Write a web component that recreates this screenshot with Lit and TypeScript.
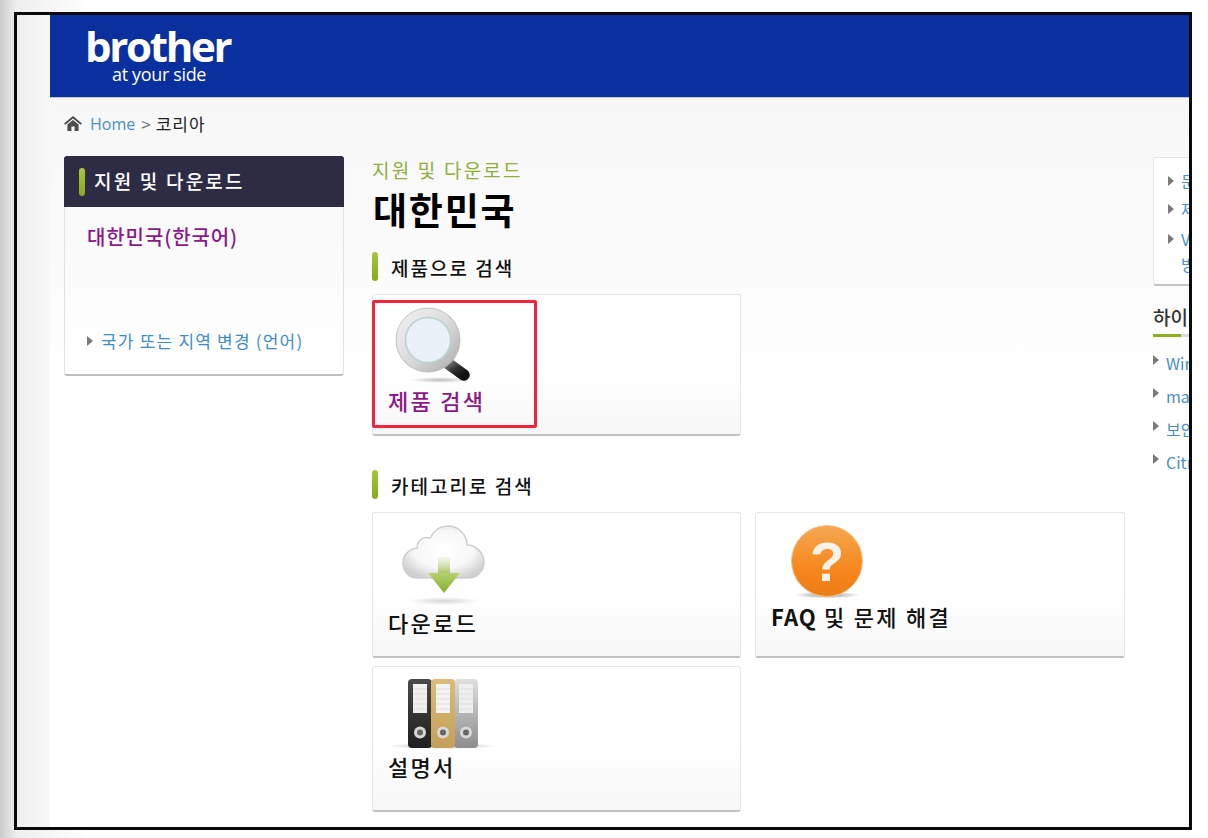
import { LitElement, html, css, svg } from 'lit';
import { customElement } from 'lit/decorators.js';

const magnifier = html`<svg width="110" height="80" viewBox="0 0 110 80">
  <defs>
    <radialGradient id="mShadow"><stop offset="0" stop-color="#888" stop-opacity=".55"/><stop offset="1" stop-color="#888" stop-opacity="0"/></radialGradient>
    <linearGradient id="mRing" x1="0" y1="0" x2="1" y2="1"><stop offset="0" stop-color="#f4f4f4"/><stop offset=".55" stop-color="#d8d8d8"/><stop offset="1" stop-color="#a9a9a9"/></linearGradient>
    <linearGradient id="mHandle" x1="0" y1="0" x2="1" y2="1"><stop offset="0" stop-color="#8a8a8a"/><stop offset=".5" stop-color="#333"/><stop offset="1" stop-color="#111"/></linearGradient>
  </defs>
  <ellipse cx="52" cy="77" rx="30" ry="3" fill="url(#mShadow)"/>
  <path d="M58 59 L76 72" stroke="url(#mHandle)" stroke-width="11.5" stroke-linecap="round"/>
  <circle cx="40" cy="37" r="32" fill="url(#mRing)" stroke="#b5b5b5" stroke-width=".8"/>
  <circle cx="40" cy="37" r="22.5" fill="#e9f1f8" stroke="#bcd0d6" stroke-width="1.5"/>
</svg>`;

const cloud = html`<svg width="110" height="90" viewBox="0 -1 110 90">
  <defs>
    <radialGradient id="cShadow"><stop offset="0" stop-color="#999" stop-opacity=".4"/><stop offset="1" stop-color="#999" stop-opacity="0"/></radialGradient>
    <radialGradient id="cFill" cx=".5" cy=".45" r=".6"><stop offset="0" stop-color="#fff"/><stop offset=".6" stop-color="#f8f8f8"/><stop offset="1" stop-color="#cfcfcf"/></radialGradient>
    <linearGradient id="cArrow" x1="0" y1="0" x2="0" y2="1"><stop offset="0" stop-color="#b6d070"/><stop offset="1" stop-color="#86b02c"/></linearGradient>
    <linearGradient id="cStem" x1="0" y1="0" x2="0" y2="1"><stop offset="0" stop-color="#e4eccb" stop-opacity=".4"/><stop offset="1" stop-color="#a3c458"/></linearGradient>
  </defs>
  <ellipse cx="56" cy="85" rx="36" ry="4" fill="url(#cShadow)"/>
  <path d="M29 62 C19 62 15 53 15 47 C15 39 21 33 29 32 C29 25 35 20 42 22 C46 14 53 10 60 10 C71 10 79 19 79 29 C88 29 96 37 96 46 C96 55 89 62 80 62 Z" fill="url(#cFill)" stroke="#cfcfcf" stroke-width="1.5"/>
  <rect x="50" y="41" width="12" height="17" fill="url(#cStem)"/>
  <path d="M40 57 H72 L56 77 Z" fill="url(#cArrow)"/>
</svg>`;

const faq = html`<svg width="110" height="84" viewBox="0 0 110 84">
  <defs>
    <radialGradient id="fShadow"><stop offset="0" stop-color="#666" stop-opacity=".7"/><stop offset="1" stop-color="#666" stop-opacity="0"/></radialGradient>
    <linearGradient id="fBall" x1="0" y1="0" x2="0" y2="1"><stop offset="0" stop-color="#f4a850"/><stop offset=".65" stop-color="#f6861c"/><stop offset="1" stop-color="#ec7c14"/></linearGradient>
  </defs>
  <ellipse cx="56" cy="80" rx="33" ry="3.5" fill="url(#fShadow)"/>
  <circle cx="56" cy="46" r="35.5" fill="url(#fBall)" stroke="#f3c48f" stroke-width="1"/>
  <text class="qmark" x="56" y="66" text-anchor="middle">?</text>
</svg>`;

const binder = (x: number, w: number, a: string, b: string) => svg`
  <rect x=${x} y="10" width=${w} height="69" rx="4" fill=${`url(#${a})`}/>
  <rect x=${x + 5} y="15" width=${w - 10} height="29" fill=${b}/>
  <path d="M${x + 5} 20 h${w - 10} M${x + 5} 25 h${w - 10} M${x + 5} 30 h${w - 10} M${x + 5} 35 h${w - 10} M${x + 5} 40 h${w - 10}" stroke="#ddd" stroke-width="1"/>
  <circle cx=${x + w / 2} cy="63.5" r="6" fill="#d8d8d8"/>
  <circle cx=${x + w / 2} cy="63.5" r="3" fill="#666"/>`;

const binders = html`<svg width="130" height="80" viewBox="0 0 130 80">
  <defs>
    <radialGradient id="bShadow"><stop offset="0" stop-color="#777" stop-opacity=".6"/><stop offset="1" stop-color="#777" stop-opacity="0"/></radialGradient>
    <linearGradient id="bBlack" x1="0" y1="0" x2="0" y2="1"><stop offset="0" stop-color="#4a4a4a"/><stop offset="1" stop-color="#1e1e1e"/></linearGradient>
    <linearGradient id="bTan" x1="0" y1="0" x2="0" y2="1"><stop offset="0" stop-color="#dcbc78"/><stop offset="1" stop-color="#c49f58"/></linearGradient>
    <linearGradient id="bGrey" x1="0" y1="0" x2="0" y2="1"><stop offset="0" stop-color="#dedede"/><stop offset="1" stop-color="#8d8d8d"/></linearGradient>
  </defs>
  <ellipse cx="55" cy="77" rx="55" ry="3" fill="url(#bShadow)"/>
  ${binder(20, 24, 'bBlack', '#f0f0f0')}
  ${binder(66, 24, 'bGrey', '#efefef')}
  ${binder(43, 24, 'bTan', '#f3f3f3')}
</svg>`;

@customElement('app-root')
export class AppRoot extends LitElement {
  static styles = css`
    :host {
      display: flex;
      box-sizing: border-box;
      height: 838px;
      padding: 12px 16px 8px 14px;
      background: linear-gradient(to right, #cbcbcb, #eeeeee 16px, #ffffff 90px);
      font-family: "Noto Sans CJK KR", "Noto Sans", sans-serif;
      color: #111;
    }
    a { text-decoration: none; color: inherit; }
    .frame {
      flex: 1;
      min-width: 0;
      border: 3px solid #0a0a0a;
      padding-left: 33px;
      overflow: hidden;
      background: linear-gradient(to right, #efefef, #ffffff 60px);
    }
    .page {
      height: 100%;
      background: linear-gradient(to bottom, #f5f5f5, #ffffff 400px);
    }
    .top {
      height: 83px;
      box-sizing: border-box;
      background: #0a2f9e;
      border-bottom: 1px solid #c8c8c8;
      padding: 12px 0 0 35px;
      color: #fff;
    }
    .logo {
      font-family: "Open Sans", sans-serif;
      font-size: 42px;
      line-height: 38px;
      font-weight: 700;
      letter-spacing: -2.3px;
    }
    .tag {
      font-family: "Open Sans", sans-serif;
      font-size: 18px;
      line-height: 19px;
      letter-spacing: -.35px;
      padding-left: 27px;
    }
    .crumb {
      display: flex;
      align-items: center;
      height: 58px;
      box-sizing: border-box;
      padding: 0 0 7px 14px;
      font-size: 17px;
      color: #222;
    }
    .crumb svg { margin-right: 8px; }
    .crumb a {
      font-family: "Open Sans", sans-serif;
      color: #4a8fc6;
      font-size: 16px;
    }
    .crumb .sep { color: #777; margin: 0 6px; }
    .crumb .here { letter-spacing: 1px; margin-left: -1px; }
    .cols {
      display: flex;
      padding-left: 14px;
      width: 1400px;
    }
    .side {
      flex: none;
      width: 280px;
      margin-right: 28px;
    }
    .side-head {
      display: flex;
      align-items: center;
      gap: 9px;
      height: 51px;
      box-sizing: border-box;
      padding-left: 15px;
      border-radius: 3px 3px 0 0;
      background: #2e2c45;
      color: #fff;
      font-size: 19px;
      font-weight: 500;
      letter-spacing: 2.2px;
    }
    .side-head .label { margin-top: -3px; }
    .side-body {
      height: 169px;
      box-sizing: border-box;
      padding: 14px 0 0 22px;
      background: linear-gradient(to bottom, #f9f9f9, #ffffff);
      border: 1px solid #e2e2e2;
      border-top: 0;
      border-bottom: 2px solid #bdbdbd;
      border-radius: 0 0 3px 3px;
    }
    .current {
      color: #8a1a86;
      font-size: 20px;
      font-weight: 500;
      line-height: 32px;
      letter-spacing: .9px;
    }
    .side-link {
      display: flex;
      align-items: center;
      gap: 8px;
      margin-top: 75px;
      font-size: 17px;
      line-height: 26px;
      letter-spacing: 1.2px;
      color: #3f8cc6;
    }
    .tri {
      flex: none;
      width: 0;
      height: 0;
      border-style: solid;
      border-width: 5px 0 5px 6px;
      border-color: transparent transparent transparent #7a7a7a;
    }
    .main {
      flex: none;
      width: 753px;
      margin-right: 28px;
    }
    .eyebrow {
      height: 28px;
      line-height: 28px;
      font-size: 19px;
      letter-spacing: 2.2px;
      color: #8fae3c;
    }
    h1 {
      margin: 0;
      height: 50px;
      padding-left: 1px;
      line-height: 50px;
      font-size: 37px;
      font-weight: 700;
      letter-spacing: 1.8px;
      color: #000;
    }
    .sec {
      display: flex;
      align-items: center;
      gap: 13px;
      height: 29px;
      margin: 18px 0 13px;
      font-size: 19px;
      font-weight: 500;
      letter-spacing: 2px;
    }
    .sec .label { margin-top: 2px; }
    .sec.next { margin-top: 34px; }
    .pill {
      flex: none;
      width: 6px;
      height: 29px;
      border-radius: 3px;
      background: linear-gradient(to bottom, #a8c63a, #8aa81e);
    }
    .side-head .pill { height: 28px; }
    .card {
      box-sizing: border-box;
      height: 146px;
      background: linear-gradient(to bottom, #ffffff 55%, #f7f7f7);
      border: 1px solid #e6e6e6;
      border-bottom: 2px solid #c2c2c2;
      border-radius: 3px;
    }
    .card.search {
      width: 369px;
      height: 142px;
      padding-top: 5px;
    }
    .tile {
      display: block;
      padding: 2px 0 0 15px;
      font-size: 22px;
      line-height: 34px;
      font-weight: 500;
      letter-spacing: 2.3px;
    }
    .tile svg { display: block; }
    .tile .qmark {
      font-family: "Liberation Sans", sans-serif;
      font-size: 56px;
      font-weight: 700;
      letter-spacing: 0;
      fill: #f8f3ea;
    }
    .tile b { font-weight: 700; letter-spacing: 1px; }
    .hit {
      box-sizing: border-box;
      width: 165px;
      height: 128px;
      margin-left: -1px;
      border: 3px solid #f0243c;
      border-radius: 2px;
      padding: 0 0 0 13px;
      color: #8a1a86;
    }
    .grid {
      display: grid;
      grid-template-columns: 369px 370px;
      column-gap: 14px;
      row-gap: 8px;
    }
    .aside { flex: none; width: 240px; }
    .notes {
      height: 129px;
      box-sizing: border-box;
      margin-top: 1px;
      padding: 9px 0 0 14px;
      background: #fff;
      border: 1px solid #e4e4e4;
      border-bottom: 2px solid #c4c4c4;
      border-radius: 3px;
      color: #4a8fc6;
      font-size: 16px;
    }
    .note {
      display: flex;
      align-items: center;
      gap: 7px;
      height: 28px;
    }
    .note.wrap { margin-top: 2px; }
    .note-rest { padding-left: 13px; line-height: 24px; margin-top: -1px; }
    .aside h2 {
      margin: 16px 0 9px;
      height: 32px;
      line-height: 30px;
      font-size: 19px;
      font-weight: 500;
      color: #333;
      border-bottom: 3px solid #d8d8d8;
      position: relative;
    }
    .aside h2::after {
      content: "";
      position: absolute;
      left: 0;
      bottom: -3px;
      width: 28px;
      height: 3px;
      background: #8fae1e;
    }
    .hl {
      display: flex;
      align-items: center;
      gap: 7px;
      height: 33px;
      font-size: 16px;
      color: #4a8fc6;
    }
    .hl .tri { margin-top: -5px; }
  `;

  render() {
    return html`
      <div class="frame">
        <div class="page">
          <div class="top">
            <div class="logo">brother</div>
            <div class="tag">at your side</div>
          </div>
          <div class="crumb">
            <svg width="18" height="15" viewBox="0 0 18 15">
              <path d="M9 0 L18 7.5 L16.6 8.8 L9 2.6 L1.4 8.8 L0 7.5 Z" fill="#4c4c4c"/>
              <path d="M3.4 8.4 L9 3.9 L14.6 8.4 V15 H10.6 V10.5 H7.4 V15 H3.4 Z" fill="#4c4c4c"/>
            </svg>
            <a href="#">Home</a><span class="sep">&gt;</span><span class="here">코리아</span>
          </div>
          <div class="cols">
            <div class="side">
              <div class="side-head"><span class="pill"></span><span class="label">지원 및 다운로드</span></div>
              <div class="side-body">
                <a class="current" href="#">대한민국(한국어)</a>
                <div class="side-link"><span class="tri"></span><a href="#">국가 또는 지역 변경 (언어)</a></div>
              </div>
            </div>
            <div class="main">
              <div class="eyebrow">지원 및 다운로드</div>
              <h1>대한민국</h1>
              <div class="sec"><span class="pill"></span><span class="label">제품으로 검색</span></div>
              <div class="card search">
                <a class="tile hit" href="#">${magnifier}제품 검색</a>
              </div>
              <div class="sec next"><span class="pill"></span><span class="label">카테고리로 검색</span></div>
              <div class="grid">
                <div class="card"><a class="tile" href="#">${cloud}다운로드</a></div>
                <div class="card"><a class="tile" href="#">${faq}<b>FAQ</b> 및 문제 해결</a></div>
                <div class="card"><a class="tile" href="#">${binders}설명서</a></div>
              </div>
            </div>
            <div class="aside">
              <div class="notes">
                <div class="note"><span class="tri"></span><a href="#">문의하기</a></div>
                <div class="note"><span class="tri"></span><a href="#">제품 등록</a></div>
                <div class="note wrap"><span class="tri"></span><a href="#">Visit</a></div>
                <div class="note-rest"><a href="#">방문</a></div>
              </div>
              <h2>하이라이트</h2>
              <div class="hl"><span class="tri"></span><a href="#">Windows</a></div>
              <div class="hl"><span class="tri"></span><a href="#">macOS</a></div>
              <div class="hl"><span class="tri"></span><a href="#">보안</a></div>
              <div class="hl"><span class="tri"></span><a href="#">Citrix</a></div>
            </div>
          </div>
        </div>
      </div>
    `;
  }
}
